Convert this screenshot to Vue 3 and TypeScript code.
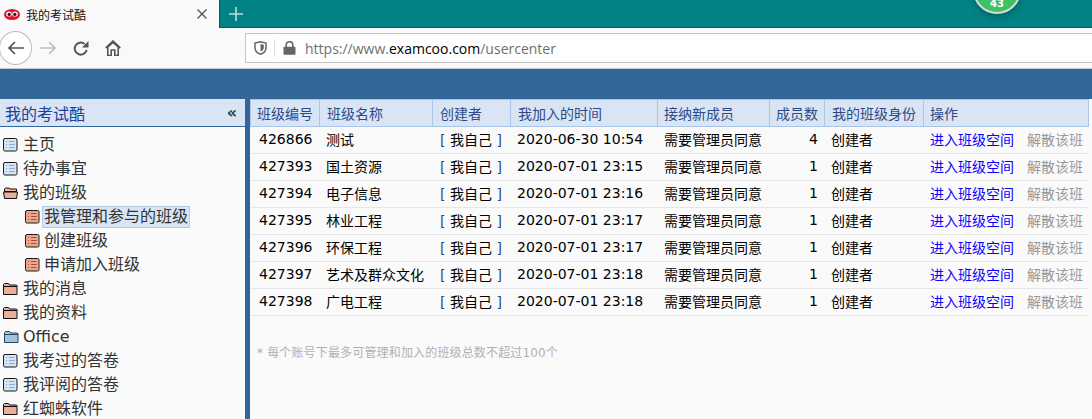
<script setup lang="ts">
type Kind = 'doc' | 'folder' | 'open' | 'blue' | 'page'
interface NavItem { label: string; kind: Kind; child?: boolean; active?: boolean }
const nav: NavItem[] = [
  { label: '主页', kind: 'doc' },
  { label: '待办事宜', kind: 'doc' },
  { label: '我的班级', kind: 'open' },
  { label: '我管理和参与的班级', kind: 'page', child: true, active: true },
  { label: '创建班级', kind: 'page', child: true },
  { label: '申请加入班级', kind: 'page', child: true },
  { label: '我的消息', kind: 'folder' },
  { label: '我的资料', kind: 'folder' },
  { label: 'Office', kind: 'blue' },
  { label: '我考过的答卷', kind: 'doc' },
  { label: '我评阅的答卷', kind: 'doc' },
  { label: '红蜘蛛软件', kind: 'folder' },
]
const heads = ['班级编号', '班级名称', '创建者', '我加入的时间', '接纳新成员', '成员数', '我的班级身份', '操作']
const widths = [70, 113, 78, 147, 112, 55, 99, 165]
const rows = [
  ['426866', '测试', '2020-06-30 10:54', '4'],
  ['427393', '国土资源', '2020-07-01 23:15', '1'],
  ['427394', '电子信息', '2020-07-01 23:16', '1'],
  ['427395', '林业工程', '2020-07-01 23:17', '1'],
  ['427396', '环保工程', '2020-07-01 23:17', '1'],
  ['427397', '艺术及群众文化', '2020-07-01 23:18', '1'],
  ['427398', '广电工程', '2020-07-01 23:18', '1'],
]
</script>

<template>
  <div class="page">
    <div class="tabbar">
      <div class="tab">
        <svg class="favicon" width="16" height="11" viewBox="0 0 16 11">
          <ellipse cx="8" cy="5.5" rx="8" ry="5.5" fill="#e8102a" />
          <ellipse cx="5" cy="5" rx="2.8" ry="2.6" fill="#f4f4f4" />
          <ellipse cx="11" cy="5" rx="2.8" ry="2.6" fill="#f4f4f4" />
          <circle cx="5.2" cy="5.4" r="1.6" fill="#222" />
          <circle cx="10.8" cy="5.4" r="1.6" fill="#222" />
        </svg>
        <span class="tab-title">我的考试酷</span>
        <svg class="tab-close" width="10" height="10" viewBox="0 0 10 10">
          <path d="M0.5 0.5 L9.5 9.5 M9.5 0.5 L0.5 9.5" stroke="#555" stroke-width="1.4" />
        </svg>
      </div>
      <div class="tab-rest">
        <svg class="plus" width="14" height="14" viewBox="0 0 14 14">
          <path d="M7 0 V14 M0 7 H14" stroke="#b6e0dc" stroke-width="1.6" />
        </svg>
        <div class="badge"><span>43</span></div>
      </div>
    </div>

    <div class="toolbar">
      <div class="back">
        <svg width="17" height="14" viewBox="0 0 17 14">
          <path d="M17 7 H2 M8 1 L2 7 L8 13" fill="none" stroke="#555" stroke-width="1.7" />
        </svg>
      </div>
      <svg class="forward" width="17" height="14" viewBox="0 0 17 14">
        <path d="M0 7 H15 M9 1 L15 7 L9 13" fill="none" stroke="#bdbdbd" stroke-width="1.6" />
      </svg>
      <svg class="reload" width="16" height="15" viewBox="0 0 16 15">
        <path d="M13.6 9 A6 6 0 1 1 11.6 3" fill="none" stroke="#555" stroke-width="2" />
        <path d="M15.5 0 V6.5 H9 Z" fill="#555" />
      </svg>
      <svg class="home" width="16" height="16" viewBox="0 0 16 16">
        <path d="M0.8 8 L8 1.2 L15.2 8" fill="none" stroke="#555" stroke-width="1.8" />
        <path d="M2.8 7 L8 2.5 L13.2 7 V15.5 H9.8 V10 H6.2 V15.5 H2.8 Z" fill="none" stroke="#555" stroke-width="1.6" />
      </svg>
      <div class="urlbar">
        <svg class="shield" width="13" height="14" viewBox="0 0 13 14">
          <path d="M1 2 L6.5 0.8 L12 2 V7 C12 10 9.5 12.2 6.5 13.2 C3.5 12.2 1 10 1 7 Z" fill="none" stroke="#666" stroke-width="1.5" />
          <path d="M6.5 3 L9.8 3.7 V7 C9.8 8.8 8.2 10 6.5 10.8 Z" fill="#666" />
        </svg>
        <span class="sep"></span>
        <svg class="lock" width="13" height="14" viewBox="0 0 13 14">
          <path d="M3.2 6 V4 A3.3 3.3 0 0 1 9.8 4 V6" fill="none" stroke="#666" stroke-width="1.6" />
          <rect x="0.5" y="5.8" width="12" height="8" rx="1" fill="#666" />
        </svg>
        <span class="url"><span class="dim">https://www.</span>examcoo.com<span class="dim">/usercenter</span></span>
      </div>
    </div>

    <div class="banner"></div>

    <div class="main">
      <aside class="sidebar">
        <div class="side-head">
          <span>我的考试酷</span>
          <span class="collapse">«</span>
        </div>
        <ul class="tree">
          <li v-for="item in nav" :key="item.label" class="node" :class="{ child: item.child }">
            <svg v-if="item.kind === 'doc' || item.kind === 'page'" class="ico" width="15" height="14" viewBox="0 0 15 14">
              <rect x="0.5" y="0.5" width="13.5" height="12.5" rx="1.5" :fill="item.kind === 'doc' ? '#d5e3f6' : '#eba88c'" stroke="#1a1a1a" />
              <path d="M3 3.5 H4 M6 3.5 H11.5 M3 6.5 H4 M6 6.5 H11.5 M3 9.5 H4 M6 9.5 H11.5" :stroke="item.kind === 'doc' ? '#8aa8d2' : '#a9492a'" />
            </svg>
            <svg v-else-if="item.kind === 'open'" class="ico" width="15" height="14" viewBox="0 0 15 14">
              <path d="M1.5 12 V3 L2.5 2 H6 L7 3 H13.5 V5.5 H1.5" fill="#f0b79c" stroke="#111" />
              <path d="M0.5 6 H14.5 L13.5 12.5 H1.5 Z" fill="#edb096" stroke="#111" />
            </svg>
            <svg v-else class="ico" :class="{ shifted: item.kind === 'blue' }" width="15" height="14" viewBox="0 0 15 14">
              <path d="M0.5 12.5 V2.5 L1.5 1.5 H5.5 L6.5 3 H13.5 L14 3.5 V12.5 Z" :fill="item.kind === 'blue' ? '#a3c4de' : '#edb096'" :stroke="item.kind === 'blue' ? '#24475f' : '#111'" />
              <path d="M1 4.5 H14" :stroke="item.kind === 'blue' ? '#24475f' : '#111'" />
            </svg>
            <span class="label" :class="{ active: item.active }">{{ item.label }}</span>
          </li>
        </ul>
      </aside>

      <section class="content">
        <table class="grid">
          <colgroup>
            <col v-for="(w, i) in widths" :key="i" :style="{ width: w + 'px' }" />
          </colgroup>
          <thead>
            <tr>
              <th v-for="h in heads" :key="h">{{ h }}</th>
            </tr>
          </thead>
          <tbody>
            <tr v-for="r in rows" :key="r[0]">
              <td class="id">{{ r[0] }}</td>
              <td>{{ r[1] }}</td>
              <td class="me"><span class="br">[</span> 我自己 <span class="br">]</span></td>
              <td>{{ r[2] }}</td>
              <td>需要管理员同意</td>
              <td class="num">{{ r[3] }}</td>
              <td>创建者</td>
              <td><a class="enter">进入班级空间</a><a class="quit">解散该班</a></td>
            </tr>
          </tbody>
        </table>
        <p class="note">* 每个账号下最多可管理和加入的班级总数不超过100个</p>
      </section>
    </div>
  </div>
</template>

<style scoped>
.page {
  width: 1092px;
  height: 419px;
  overflow: hidden;
  display: flex;
  flex-direction: column;
  background: #fafafa;
  font-family: "DejaVu Sans", "Noto Sans CJK SC", sans-serif;
  color: #111;
}
.tabbar { display: flex; height: 28px; flex: none; }
.tab {
  width: 219px;
  display: flex;
  align-items: center;
  padding: 0 12px 0 4px;
  box-sizing: border-box;
  background: #f9f9fa;
}
.favicon { flex: none; }
.tab-title { margin-left: 6px; font-size: 12px; flex: 1; color: #111; }
.tab-close { flex: none; }
.tab-rest {
  flex: 1;
  background: #028284;
  border-left: 1px solid #025f60;
  border-bottom: 1px solid #025f60;
  display: flex;
  align-items: center;
  position: relative;
}
.plus { margin-left: 9px; }
.badge {
  position: absolute;
  left: 753px;
  top: -34px;
  width: 48px;
  height: 48px;
  border-radius: 50%;
  box-sizing: border-box;
  background: #3fc168;
  border: 2px solid #d4dbd8;
  box-shadow: 0 2px 6px rgba(0, 50, 50, 0.45);
  color: #fff;
  font-size: 10px;
  font-weight: bold;
  display: flex;
  align-items: flex-end;
  justify-content: center;
  line-height: 12px;
  padding-bottom: 2px;
}
.toolbar {
  height: 41px;
  flex: none;
  display: flex;
  align-items: center;
  background: #f9f9fa;
  border-bottom: 1px solid #c8c8c8;
  box-sizing: border-box;
}
.back {
  width: 33px;
  height: 34px;
  margin-left: -1px;
  border: 1px solid #bdbdbd;
  border-radius: 50%;
  background: #fff;
  display: flex;
  align-items: center;
  justify-content: center;
  flex: none;
  box-sizing: border-box;
}
.forward { margin-left: 8px; flex: none; }
.reload { margin-left: 16px; flex: none; }
.home { margin-left: 16px; flex: none; }
.urlbar {
  margin-left: 124px;
  flex: 1;
  height: 30px;
  box-sizing: border-box;
  background: #fff;
  border: 1px solid #c4c4c4;
  border-right: none;
  display: flex;
  align-items: center;
  border-radius: 2px 0 0 2px;
}
.shield { margin-left: 8px; flex: none; }
.sep { width: 1px; height: 18px; background: #e2e2e2; margin-left: 7px; flex: none; }
.lock { margin-left: 8px; flex: none; }
.url { margin-left: 9px; font-family: "Open Sans", "Noto Sans", sans-serif; font-size: 14px; color: #000; }
.dim { color: #6f6f6f; }
.banner { height: 30px; flex: none; background: #336699; }
.main { flex: 1; display: flex; min-height: 0; background: #fafafa; }
.sidebar {
  width: 245px;
  flex: none;
  border-right: 5px solid #336699;
  box-sizing: content-box;
}
.side-head {
  height: 27px;
  background: #d9e5f5;
  border-bottom: 1px solid #336699;
  display: flex;
  align-items: center;
  justify-content: space-between;
  padding: 0 8px 0 5px;
  font-size: 16px;
  color: #20409a;
}
.collapse { font-size: 16px; font-weight: bold; color: #114455; line-height: 16px; }
.tree { list-style: none; margin: 0; padding: 6px 0 0; }
.node {
  height: 24px;
  display: flex;
  align-items: center;
  padding-left: 3px;
  font-size: 16px;
  color: #333;
}
.node.child { padding-left: 25px; }
.ico { flex: none; margin-right: 3px; }
.ico.shifted { transform: translateX(1px); }
.node.child .ico { margin-right: 2px; }
.label { padding: 0 1px; border: 1px solid transparent; line-height: 20px; white-space: nowrap; }
.label.active { background: #d9e5f5; border-color: #b3cbe9; }
.content { flex: 1; min-width: 0; }
.grid {
  table-layout: fixed;
  border-collapse: separate;
  border-spacing: 0;
  width: 839px;
  font-size: 14px;
}
.grid th {
  height: 28px;
  box-sizing: border-box;
  padding: 0 0 0 7px;
  background: #d9e5f5;
  border: 1px solid #a9c5ea;
  border-left: none;
  font-weight: normal;
  text-align: left;
  font-size: 14px;
  color: #2d4a86;
  white-space: nowrap;
}
.grid th:first-child { border-left: 1px solid #a9c5ea; padding-left: 6px; }
.grid th:nth-child(5), .grid th:nth-child(6), .grid th:nth-child(8) { padding-left: 6px; }
.grid td {
  height: 27px;
  box-sizing: border-box;
  padding: 0 0 2px 6px;
  border-bottom: 1px solid #e6e6e6;
  white-space: nowrap;
  color: #000;
}
.grid td.id { padding-left: 9px; }
.grid td.me { padding-left: 7px; }
.br { color: #2d4a86; }
.grid td.num { text-align: right; padding-right: 7px; }
.enter { color: #0a00ff; margin-right: 13px; }
.quit { color: #999; }
.note {
  margin: 27px 0 0 7px;
  font-size: 12px;
  letter-spacing: 0.16px;
  color: #b0b0b0;
}
</style>
